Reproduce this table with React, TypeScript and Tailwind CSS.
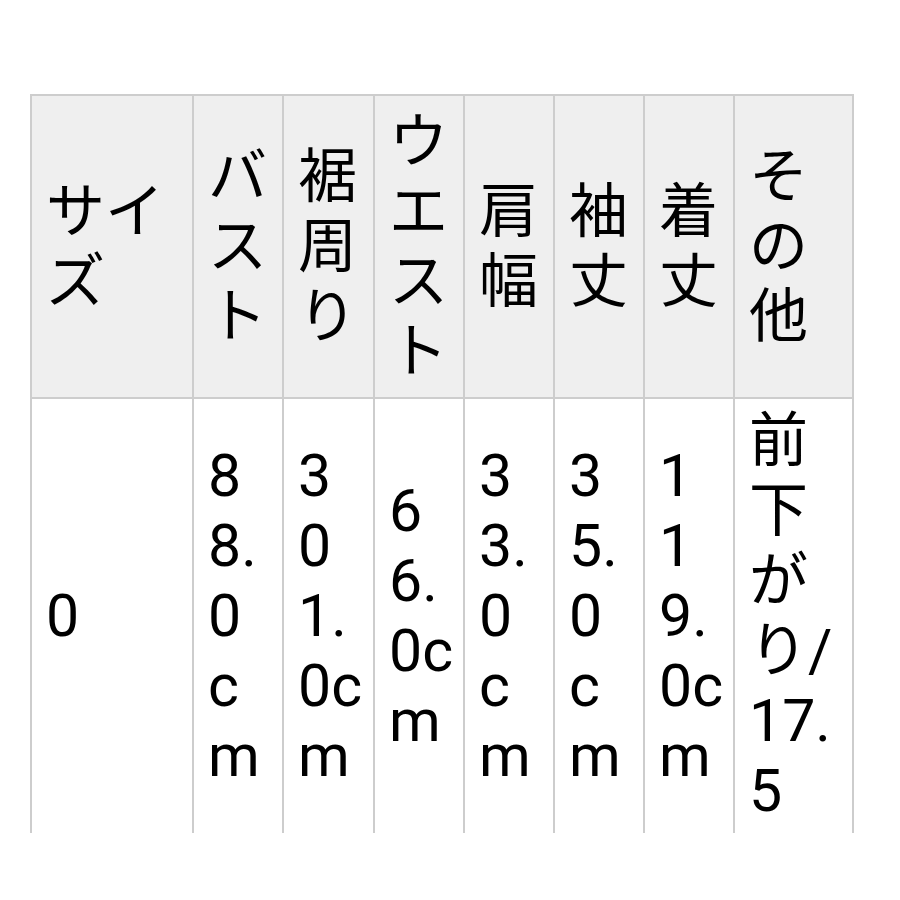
const headers: string[][] = [
  ["サイ", "ズ"],
  ["バ", "ス", "ト"],
  ["裾", "周", "り"],
  ["ウ", "エ", "ス", "ト"],
  ["肩", "幅"],
  ["袖", "丈"],
  ["着", "丈"],
  ["そ", "の", "他"],
];

const values: string[][] = [
  ["0"],
  ["8", "8.", "0", "c", "m"],
  ["3", "0", "1.", "0c", "m"],
  ["6", "6.", "0c", "m"],
  ["3", "3.", "0", "c", "m"],
  ["3", "5.", "0", "c", "m"],
  ["1", "1", "9.", "0c", "m"],
  ["前", "下", "が", "り/", "17.", "5"],
];

function Cell({ lines, head }: { lines: string[]; head?: boolean }) {
  return (
    <div
      className={`flex items-center px-[14px] ${head ? "bg-[#efefef]" : "bg-white"}`}
    >
      <div>
        {lines.map((l, i) => (
          <div key={i} className="whitespace-pre">
            {l}
          </div>
        ))}
      </div>
    </div>
  );
}

export default function App() {
  return (
    <div className="min-h-[900px] bg-white pt-[94px] pl-[30px]">
      <div
        className="grid w-fit grid-cols-[160px_88px_89px_88px_88px_88px_88px_117px] grid-rows-[301px_434px] gap-[2px] bg-[#cdcdcd] px-[2px] pt-[2px] text-[59px] leading-[70px] text-black"
        style={{ fontFamily: 'Roboto, "Noto Sans CJK JP", sans-serif' }}
      >
        {headers.map((h, i) => (
          <Cell key={"h" + i} lines={h} head />
        ))}
        {values.map((v, i) => (
          <Cell key={"v" + i} lines={v} />
        ))}
      </div>
    </div>
  );
}
